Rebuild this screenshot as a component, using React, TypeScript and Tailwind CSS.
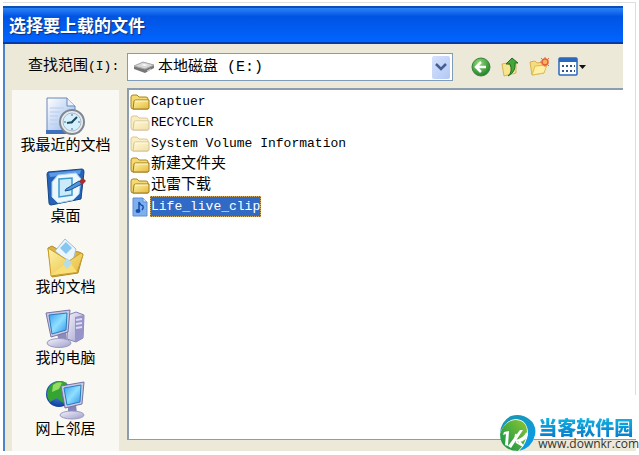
import React from "react";

type Place = { label: string; icon: React.ReactNode };
type FileItem = { name: string; kind: "folder" | "hidden" | "music" };

// Shared fills for the icons below
function Gradients() {
  return (
    <svg className="absolute h-0 w-0" aria-hidden="true">
      <defs>
        <linearGradient id="screen" x1="0" y1="0" x2="1" y2="1">
          <stop offset="0" stopColor="#3d9df0" />
          <stop offset="0.5" stopColor="#8fe0ff" />
          <stop offset="1" stopColor="#2f8fe8" />
        </linearGradient>
        <linearGradient id="metal" x1="0" y1="0" x2="1" y2="1">
          <stop offset="0" stopColor="#f4f3fb" />
          <stop offset="1" stopColor="#9f9ecb" />
        </linearGradient>
        <linearGradient id="paper" x1="0" y1="0" x2="1" y2="1">
          <stop offset="0" stopColor="#ffffff" />
          <stop offset="1" stopColor="#8fb2e8" />
        </linearGradient>
        <linearGradient id="gold" x1="0" y1="0" x2="1" y2="1">
          <stop offset="0" stopColor="#fff3a6" />
          <stop offset="1" stopColor="#e5b93b" />
        </linearGradient>
        <radialGradient id="green" cx="0.4" cy="0.3" r="0.7">
          <stop offset="0" stopColor="#8fdd74" />
          <stop offset="1" stopColor="#23832a" />
        </radialGradient>
        <radialGradient id="globe" cx="0.5" cy="0.4" r="0.6">
          <stop offset="0" stopColor="#4f9cf0" />
          <stop offset="1" stopColor="#123c9c" />
        </radialGradient>
        <linearGradient id="brand" x1="0" y1="0" x2="1" y2="1">
          <stop offset="0" stopColor="#1b97a8" />
          <stop offset="1" stopColor="#0a9bf0" />
        </linearGradient>
        <linearGradient id="leaf" x1="1" y1="0" x2="0" y2="1">
          <stop offset="0" stopColor="#8cc832" />
          <stop offset="1" stopColor="#0b8f4a" />
        </linearGradient>
      </defs>
    </svg>
  );
}

function RecentIcon() {
  return (
    <svg viewBox="0 0 40 40" className="h-10 w-10">
      <path d="M2 2h20l8 8v27H2z" fill="url(#paper)" stroke="#6987bd" />
      <path d="M1 34h20v4H1z" fill="#3f6fbf" />
      <path d="M22 2v8h8" fill="#e8f0fc" stroke="#6987bd" />
      <path d="M5 12h14M5 16h10M5 20h8M5 24h8M5 28h9" stroke="#b9cdf0" />
      <circle cx="27" cy="26" r="12" fill="#e9edf2" stroke="#7f8792" strokeWidth="2" />
      <circle cx="27" cy="26" r="9" fill="#d6f1fb" stroke="#aab7c4" />
      <path d="M26 27l6-6M28 26l-6 1" stroke="#1c4a63" strokeWidth="2" />
      <path d="M27 18v2M27 32v2M19 26h2M33 26h2" stroke="#3a789b" />
    </svg>
  );
}

function DesktopIcon() {
  return (
    <svg viewBox="0 0 40 40" className="h-10 w-10">
      <path d="M2 5l34-3q2 0 2 3l-3 27-30 6q-2 0-2-2L1 7z" fill="#2563b9" stroke="#174684" />
      <path d="M3 6l32-3-1 4-30 3z" fill="#5c9ae6" />
      <path d="M12 8l18-2 5 6-2 15-6 6-15 3-6-6V15z" fill="#ecf7fd" stroke="#a7d0f2" />
      <path d="M13 12l13-1v17l-13 2z" fill="#c9ebfb" stroke="#3e9acb" strokeWidth="1.5" />
      <path d="M20 22l13-8 3 3-12 6-5 1z" fill="#4b99dc" stroke="#184b8f" />
      <path d="M33 14l4-3 3 3-4 4z" fill="#a3302f" />
    </svg>
  );
}

function DocumentsIcon() {
  return (
    <svg viewBox="0 0 40 40" className="h-10 w-10">
      <path d="M3 10l4-2 5 3 22 3 4 2-5 19-26 4z" fill="#ddb544" stroke="#b18b26" />
      <path d="M20 1l11 10-4 16-17-14z" fill="#eaf6ff" stroke="#a2bdd3" />
      <path d="M21 4l6 6-6 6-6-6z" fill="#87c6ee" />
      <path d="M3 10l21 13 12-8 2 2-6 17-26 4z" fill="url(#gold)" stroke="#c89c2b" />
      <path d="M6 37l18-14 8 11z" fill="#f9df76" />
      <path d="M22 20l5 5-5 6-4-5z" fill="#b5dcea" />
    </svg>
  );
}

function ComputerIcon() {
  return (
    <svg viewBox="0 0 40 40" className="h-10 w-10">
      <path d="M23 6l8-3 8 3-1 23-7 4-9-3z" fill="url(#metal)" stroke="#8583b8" />
      <path d="M30 8v25l8-4 1-23z" fill="#9694c8" />
      <path d="M31 11l6-1M31 15l6-1M31 19l6-1" stroke="#dedcf7" strokeWidth="2" />
      <path d="M12 25l9-2 1 9-8 1z" fill="#8c8bbb" />
      <ellipse cx="14" cy="34" rx="12" ry="4.5" fill="url(#metal)" stroke="#9a99c2" />
      <path d="M1 4l24-3-2 22-17 5z" fill="#c9c8e2" stroke="#7573a8" />
      <path d="M4 6l18-2-1 17-14 4z" fill="url(#screen)" stroke="#287dbd" />
    </svg>
  );
}

function NetworkIcon() {
  return (
    <svg viewBox="0 0 40 40" className="h-10 w-10">
      <circle cx="14" cy="14" r="13" fill="url(#globe)" />
      <path d="M5 6q8-8 17-3l-5 7 1 13-6-5-7 4Q-1 14 5 6z" fill="#35a433" />
      <path d="M8 5q5-4 9-2l-3 6-7 3z" fill="#94dd63" />
      <path d="M23 26l8-1 1 8-9 1z" fill="#8583b8" />
      <ellipse cx="27" cy="35" rx="12" ry="4" fill="url(#metal)" stroke="#9a99c2" />
      <path d="M16 6l23-4-2 22-17 4z" fill="#c9c8e2" stroke="#7573a8" />
      <path d="M19 8l17-3-1 17-13 3z" fill="url(#screen)" stroke="#287dbd" />
    </svg>
  );
}

function FileIcon({ kind }: { kind: FileItem["kind"] }) {
  if (kind === "music") {
    return (
      <svg viewBox="0 0 20 20" className="h-5 w-5 shrink-0">
        <path d="M3 1h10l4 4v14H3z" fill="#7fb0ee" stroke="#5f8fd0" />
        <path d="M13 1v4h4" fill="#c9e0ff" stroke="#5f8fd0" />
        <path d="M9 14V5q1 3 4 4 1 2-1 4" fill="none" stroke="#174eab" strokeWidth="1.5" />
        <ellipse cx="8" cy="14" rx="2.5" ry="2" fill="#174eab" />
      </svg>
    );
  }
  return (
    <svg viewBox="0 0 20 20" className={kind === "hidden" ? "h-5 w-5 shrink-0 opacity-45" : "h-5 w-5 shrink-0"}>
      <path d="M1 5q0-2 2-2h4l2 2h7q2 0 2 2v10H3q-2 0-2-2z" fill="#f5da70" stroke="#a88424" />
      <path d="M3 17l1-8q0-1 2-1h13v8q0 1-2 1z" fill="url(#gold)" stroke="#9c7b20" />
      <path d="M5 9h13" stroke="#fffbd1" />
    </svg>
  );
}

function DriveIcon() {
  return (
    <svg viewBox="0 0 20 16" className="h-4 w-5 shrink-0">
      <path d="M0 7l9-4 11 3v3l-9 5-11-4z" fill="#777" />
      <path d="M0 7l9-4 11 3-9 4z" fill="#d7d7d7" stroke="#aaa" />
      <path d="M7 6l3-1 4 1-3 1z" fill="#f8f8f8" />
      <path d="M13 12l4-2" stroke="#ddd" />
    </svg>
  );
}

function BackIcon() {
  return (
    <svg viewBox="0 0 20 20" className="h-5 w-5">
      <circle cx="10" cy="10" r="9" fill="url(#green)" stroke="#38843a" />
      <path d="M10 5l-5 5 5 5M5 10h10" fill="none" stroke="#fff" strokeWidth="2.5" />
    </svg>
  );
}

function UpIcon() {
  return (
    <svg viewBox="0 0 20 20" className="h-5 w-5">
      <path d="M2 7l5-1 2 2 7-1v9L4 19z" fill="#f7e48c" stroke="#d3b552" />
      <path d="M8 19q5-4 2-12H6l6-6 6 5h-3q1 9-7 13z" fill="#43a638" stroke="#236d27" />
    </svg>
  );
}

function NewFolderIcon() {
  return (
    <svg viewBox="0 0 20 20" className="h-5 w-5">
      <path d="M1 5l5-1 2 2 7-1v11L3 18z" fill="#f6dc7c" stroke="#d6b252" />
      <path d="M3 18L6 9l12-1-3 8z" fill="#fff0a2" stroke="#dcbc5c" />
      <circle cx="16" cy="5" r="3" fill="#ffb15a" stroke="#e0603a" strokeWidth="1.5" />
      <path d="M16 0v2M16 8v2M12 5h-1M12 1l1 1M19 8l1 1M20 1l-1 1" stroke="#e56b3f" />
    </svg>
  );
}

function ViewIcon() {
  return (
    <svg viewBox="0 0 29 20" className="h-5 w-[29px]">
      <rect x="1" y="1" width="18" height="17" rx="1" fill="#fff" stroke="#2868bf" strokeWidth="1.5" />
      <path d="M1 1h18v4H1z" fill="#2868bf" />
      <path d="M4 9h2M8 9h2M12 9h2M16 9h1M4 14h2M8 14h2M12 14h2M16 14h1" stroke="#34558c" strokeWidth="2" />
      <path d="M21 8h7l-3.5 4z" fill="#111" />
    </svg>
  );
}

function BrandLogo() {
  return (
    <svg viewBox="0 0 38 38" className="h-[38px] w-[38px] shrink-0">
      <path d="M1 20Q1 7 12 2q10-3 18 3 8 6 6 16-3 12-15 16-8 1-14-5Q1 27 1 20z" fill="#fff" />
      <path d="M1 19Q2 7 12 2q10-3 18 3 8 6 6 16-3 13-16 16 8-8 9-17Q29 6 17 5 7 5 1 19z" fill="url(#brand)" />
      <path d="M1 20Q5 7 16 6q12 0 12 12-1 12-9 19Q8 37 3 29 1 25 1 20z" fill="url(#leaf)" />
      <path d="M5 18l5-1-1 15-3-1 1-11-3 1z" fill="#fff" />
      <path d="M9 32l12-16h3L12 34z" fill="#fff" />
      <path d="M17 20l-1 7M17 27q8-2 11-8-1 7-8 8l4 5-7-4" fill="none" stroke="#fff" strokeWidth="2" />
    </svg>
  );
}

const places: Place[] = [
  { label: "我最近的文档", icon: <RecentIcon /> },
  { label: "桌面", icon: <DesktopIcon /> },
  { label: "我的文档", icon: <DocumentsIcon /> },
  { label: "我的电脑", icon: <ComputerIcon /> },
  { label: "网上邻居", icon: <NetworkIcon /> },
];

const files: FileItem[] = [
  { name: "Captuer", kind: "folder" },
  { name: "RECYCLER", kind: "hidden" },
  { name: "System Volume Information", kind: "hidden" },
  { name: "新建文件夹", kind: "folder" },
  { name: "迅雷下载", kind: "folder" },
  { name: "Life_live_clip", kind: "music" },
];

const tools = [
  { label: "后退", icon: <BackIcon /> },
  { label: "向上", icon: <UpIcon /> },
  { label: "新建文件夹", icon: <NewFolderIcon /> },
  { label: "查看", icon: <ViewIcon /> },
];

function nameClass(file: FileItem) {
  if (file.kind === "music") return "border border-dotted border-[#d4ad69] bg-[#316ac5] leading-[19px] text-white";
  return /^[A-Z]/.test(file.name) ? "px-px leading-5" : "px-px text-[15px] leading-5";
}

export default function App() {
  return (
    <div className="relative flex min-h-screen flex-col bg-white pb-[5px] pl-[3px] pr-[3px] pt-[2px] font-['Liberation_Mono','Noto_Sans_CJK_SC',monospace] text-[13px] text-black">
      <Gradients />
      <main className="flex flex-1 flex-col border-t border-[#dedede]">
        <div className="border-r border-[#dedede] pr-[12px] pt-[3px]">
          <header className="flex h-[38px] items-center border-y-2 border-b-[#0739a5] border-t-[#0b4fb8] bg-linear-to-b from-[#2c83f5] via-[#0054e3] via-25% to-[#0264ff] pl-[6px]">
            <h1 className="font-['Noto_Sans_CJK_SC',sans-serif] text-[17px] font-bold text-white [text-shadow:1px_1px_1px_#10307c]">选择要上载的文件</h1>
          </header>
          <div className="border-l-2 border-[#4c83c9] bg-[#ece9d8]">
            <div className="flex h-[44px] items-center pl-[23px] pt-[2px]">
              <label htmlFor="location" className="w-[99px] shrink-0 whitespace-nowrap">
                <span className="text-[15px]">查找范围</span>(I):
              </label>
              <div className="flex h-7 max-w-[326px] flex-1 items-center border border-[#7f9db9] bg-white pl-[6px] pr-[2px]">
                <DriveIcon />
                <select id="location" className="h-full min-w-0 flex-1 appearance-none bg-transparent pl-1 pt-[3px] text-[15px] outline-none">
                  <option>本地磁盘 (E:)</option>
                </select>
                <span className="pointer-events-none flex h-[23px] w-[18px] items-center justify-center rounded-xs bg-linear-to-br from-[#d6e2fd] to-[#b3c8f5]">
                  <svg viewBox="0 0 12 8" className="h-2 w-3"><path d="M1 1l5 5 5-5" fill="none" stroke="#435f91" strokeWidth="2.5" /></svg>
                </span>
              </div>
              <div className="ml-[18px] flex gap-[9px]">
                {tools.map((tool) => (
                  <button key={tool.label} aria-label={tool.label} className="shrink-0">{tool.icon}</button>
                ))}
              </div>
            </div>
            <div className="ml-[122px] border-t-2 border-[#8c9daf]" />
          </div>
        </div>

        <div className="flex flex-1 border-l-2 border-[#4c83c9] bg-[#ece9d8]">
          <nav className="ml-[7px] mr-2 flex w-[107px] shrink-0 flex-col items-center bg-[#f9f8f3] pt-[6px]">
            {places.map((place) => (
              <button key={place.label} className="flex h-[71px] flex-col items-center gap-[3px]">
                {place.icon}
                <span className="text-[15px] leading-4">{place.label}</span>
              </button>
            ))}
          </nav>
          <div className="mb-[11px] flex flex-1 flex-col border-b border-l-2 border-[#8c9daf] bg-white">
            <ul className="flex-1 border-r border-[#dedede] pl-px pt-px">
              {files.map((file) => (
                <li key={file.name} className="h-[21px]">
                  <button className="flex h-[21px] items-center">
                    <FileIcon kind={file.kind} />
                    <span className={nameClass(file)}>{file.name}</span>
                  </button>
                </li>
              ))}
            </ul>
            <div className="h-11" />
          </div>
        </div>
      </main>

      <a href="#downkr" className="absolute bottom-[4px] right-0 flex items-center gap-px font-['Open_Sans','Noto_Sans_CJK_SC',sans-serif]">
        <BrandLogo />
        <span className="flex flex-col">
          <strong className="bg-linear-to-b from-[#16b7e5] to-[#0b78c9] bg-clip-text font-['Noto_Sans_CJK_SC',sans-serif] text-[19px] font-black leading-[22px] text-transparent">当客软件园</strong>
          <span className="text-[12px] leading-3 text-[#333]">www.downkr.com</span>
        </span>
      </a>
    </div>
  );
}
